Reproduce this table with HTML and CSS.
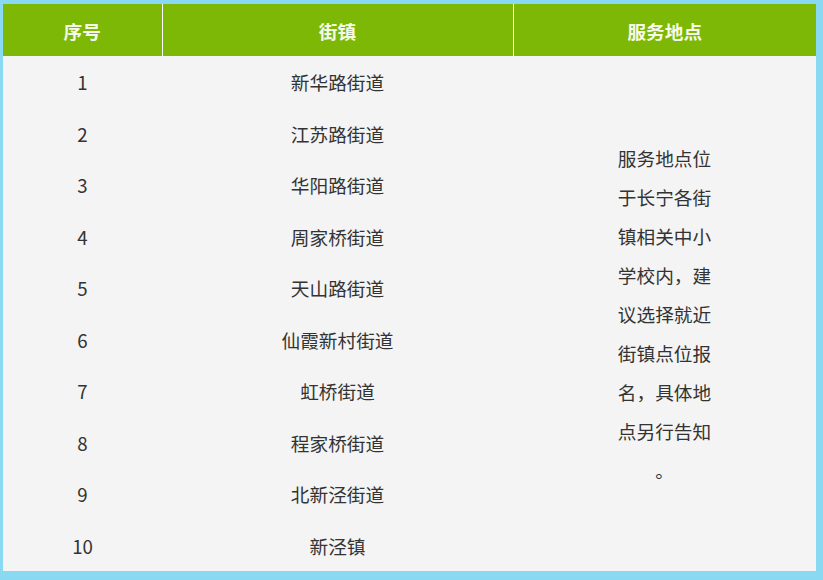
FILE: index.html
```html
<!DOCTYPE html>
<html lang="zh-CN">
<head>
<meta charset="utf-8">
<link rel="stylesheet" href="styles.css">
</head>
<body>
<table class="grid">
  <colgroup>
    <col class="c1"><col class="c2"><col class="c3">
  </colgroup>
  <thead>
    <tr><th>序号</th><th class="sep">街镇</th><th class="sep">服务地点</th></tr>
  </thead>
  <tbody>
    <tr><td>1</td><td>新华路街道</td><td class="place" rowspan="10"><div class="place-text">服务地点位于长宁各街镇相关中小学校内，建议选择就近街镇点位报名，具体地点另行告知。</div></td></tr>
    <tr><td>2</td><td>江苏路街道</td></tr>
    <tr><td>3</td><td>华阳路街道</td></tr>
    <tr><td>4</td><td>周家桥街道</td></tr>
    <tr><td>5</td><td>天山路街道</td></tr>
    <tr><td>6</td><td>仙霞新村街道</td></tr>
    <tr><td>7</td><td>虹桥街道</td></tr>
    <tr><td>8</td><td>程家桥街道</td></tr>
    <tr><td>9</td><td>北新泾街道</td></tr>
    <tr><td>10</td><td>新泾镇</td></tr>
  </tbody>
</table>
</body>
</html>
```

FILE: styles.css
```css
html, body {
  margin: 0;
  padding: 0;
}
body {
  background: #88d9f1;
  padding: 4px 7px 9px 3px;
  font-family: "Noto Sans CJK SC", "Noto Sans", sans-serif;
  color: #333;
}
.grid {
  border-collapse: collapse;
  border-spacing: 0;
  width: 813px;
  table-layout: fixed;
  background: #f4f4f4;
}
.c1 { width: 159px; }
.c2 { width: 351px; }
.c3 { width: 303px; }
.grid th {
  background: #7cb805;
  color: #f6fbe9;
  font-weight: bold;
  font-size: 18.67px;
  height: 52px;
  padding: 0;
  text-align: center;
  vertical-align: middle;
}
.grid th.sep {
  border-left: 1px solid #ffffff;
}
.grid td {
  height: 51.5px;
  padding: 0;
  text-align: center;
  vertical-align: middle;
  font-size: 18.67px;
  color: #333;
}
.grid td.place {
  vertical-align: middle;
}
.place-text {
  width: 100px;
  margin: 0 auto;
  line-height: 39px;
  text-align: center;
  line-break: anywhere;
}
```
